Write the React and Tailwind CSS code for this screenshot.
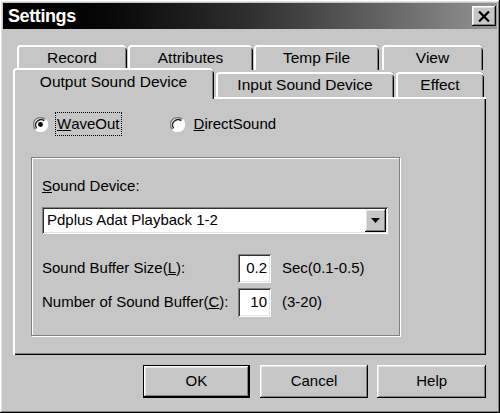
const raised =
  "shadow-[inset_-1px_-1px_0_#000,inset_1px_1px_0_#fff,inset_-2px_-2px_0_#808080,inset_2px_2px_0_#e4e4e4]";
const sunken =
  "shadow-[inset_1px_1px_0_#808080,inset_-1px_-1px_0_#fff,inset_2px_2px_0_#303030,inset_-2px_-2px_0_#e4e4e4]";
const tabEdge =
  "rounded-t-[4px] shadow-[inset_2px_0_0_#fff,inset_0_2px_0_#fff,inset_-1px_0_0_#000,inset_-2px_0_0_#808080]";

const Tab = ({ label, className }) => (
  <div className={`flex items-center justify-center ${tabEdge} ${className}`}>
    {label}
  </div>
);

const Radio = ({ checked }) => (
  <svg width="15" height="15" viewBox="0 0 14 14">
    <circle cx="7" cy="7" r="6.5" fill="#fff" />
    <path d="M2.4 11.6 A6.5 6.5 0 0 1 11.6 2.4" fill="none" stroke="#808080" strokeWidth="1.4" />
    <path d="M3.5 10.5 A5 5 0 0 1 10.5 3.5" fill="none" stroke="#202020" strokeWidth="1.2" />
    <path d="M11.6 2.4 A6.5 6.5 0 0 1 2.4 11.6" fill="none" stroke="#fff" strokeWidth="1.4" />
    {checked && <circle cx="7" cy="7" r="2.3" fill="#000" />}
  </svg>
);

const App = () => {
  return (
    <div
      className={`w-[500px] h-[413px] p-[3px] flex flex-col bg-[#c6c6c6] text-black text-[15px] ${raised}`}
      style={{ fontFamily: '"Liberation Sans", Arial, sans-serif' }}
    >
      <div className="h-[26px] flex items-center justify-between pl-[5px] pr-[1px] bg-gradient-to-r from-[#000] via-[#303030] to-[#959595]">
        <span className="text-white font-bold text-[18px] tracking-[-0.4px]">Settings</span>
        <button className={`w-[24px] h-[20px] flex items-center justify-center bg-[#c6c6c6] ${raised}`}>
          <svg width="12" height="11" viewBox="0 0 12 11">
            <path d="M1 0.5 L11 10.5 M11 0.5 L1 10.5" stroke="#000" strokeWidth="2.2" />
          </svg>
        </button>
      </div>

      <div className="flex-1 flex flex-col pl-[10px] pr-[11px]">
        <div className="mt-[16px] flex h-[25px] pl-[4px] text-[15.5px]">
          <Tab label="Record" className="w-[110px]" />
          <Tab label="Attributes" className="ml-[1px] w-[125px]" />
          <Tab label="Temp File" className="ml-[1px] w-[125px]" />
          <Tab label="View" className="ml-[3px] w-[101px]" />
        </div>
        <div className="flex h-[27px] items-end text-[15.5px]">
          <Tab
            label="Output Sound Device"
            className="relative z-10 -mb-[2px] w-[201px] h-[31px] pb-[4px] bg-[#c6c6c6]"
          />
          <Tab label="Input Sound Device" className="ml-[2px] w-[178px] h-[25px]" />
          <Tab label="Effect" className="ml-[2px] w-[88px] h-[25px]" />
        </div>

        <div className="w-[473px] h-[258px] flex flex-col pt-[15px] pl-[18px] shadow-[inset_2px_2px_0_#fff,inset_-1px_-1px_0_#000,inset_-2px_-2px_0_#808080]">
          <div className="h-[24px] flex items-center pl-[2px]">
            <Radio checked />
            <span className="ml-[7px] h-[24px] px-[1px] flex items-center border border-dotted border-black">
              <span className="underline">W</span>aveOut
            </span>
            <span className="ml-[48px] flex">
              <Radio />
            </span>
            <span className="ml-[9px]">
              <span className="underline">D</span>irectSound
            </span>
          </div>

          <div className="mt-[21px] w-[369px] h-[179px] flex flex-col pl-[10px] pt-[18px] border border-[#808080] shadow-[inset_1px_1px_0_#fff,1px_1px_0_#fff]">
            <div className="h-[20px] flex items-center">
              <span>
                <span className="underline">S</span>ound Device:
              </span>
            </div>
            <div className={`mt-[11px] w-[346px] h-[27px] flex items-center justify-between bg-white pl-[5px] pr-[2px] ${sunken}`}>
              <span>Pdplus Adat Playback 1-2</span>
              <div className={`w-[21px] h-[23px] flex items-center justify-center bg-[#c6c6c6] ${raised}`}>
                <svg width="9" height="5" viewBox="0 0 9 5">
                  <path d="M0 0 H9 L4.5 5 Z" fill="#000" />
                </svg>
              </div>
            </div>

            <div className="mt-[20px] h-[29px] flex items-center">
              <span className="w-[196px]">
                Sound Buffer Size(<span className="underline">L</span>):
              </span>
              <div className={`w-[33px] h-[29px] flex items-center justify-end pr-[4px] bg-white ${sunken}`}>
                0.2
              </div>
              <span className="ml-[11px]">Sec(0.1-0.5)</span>
            </div>
            <div className="mt-[5px] h-[29px] flex items-center">
              <span className="w-[196px]">
                Number of Sound Buffer(<span className="underline">C</span>):
              </span>
              <div className={`w-[33px] h-[29px] flex items-center justify-end pr-[4px] bg-white ${sunken}`}>
                10
              </div>
              <span className="ml-[11px]">(3-20)</span>
            </div>
          </div>
        </div>

        <div className="mt-[10px] flex pl-[130px]">
          <button className={`w-[107px] h-[33px] flex items-center justify-center bg-[#c6c6c6] border border-black ${raised}`}>
            OK
          </button>
          <button className={`ml-[10px] w-[109px] h-[33px] flex items-center justify-center bg-[#c6c6c6] ${raised}`}>
            Cancel
          </button>
          <button className={`ml-[9px] w-[109px] h-[33px] flex items-center justify-center bg-[#c6c6c6] ${raised}`}>
            Help
          </button>
        </div>
      </div>
    </div>
  );
};

export default App;
